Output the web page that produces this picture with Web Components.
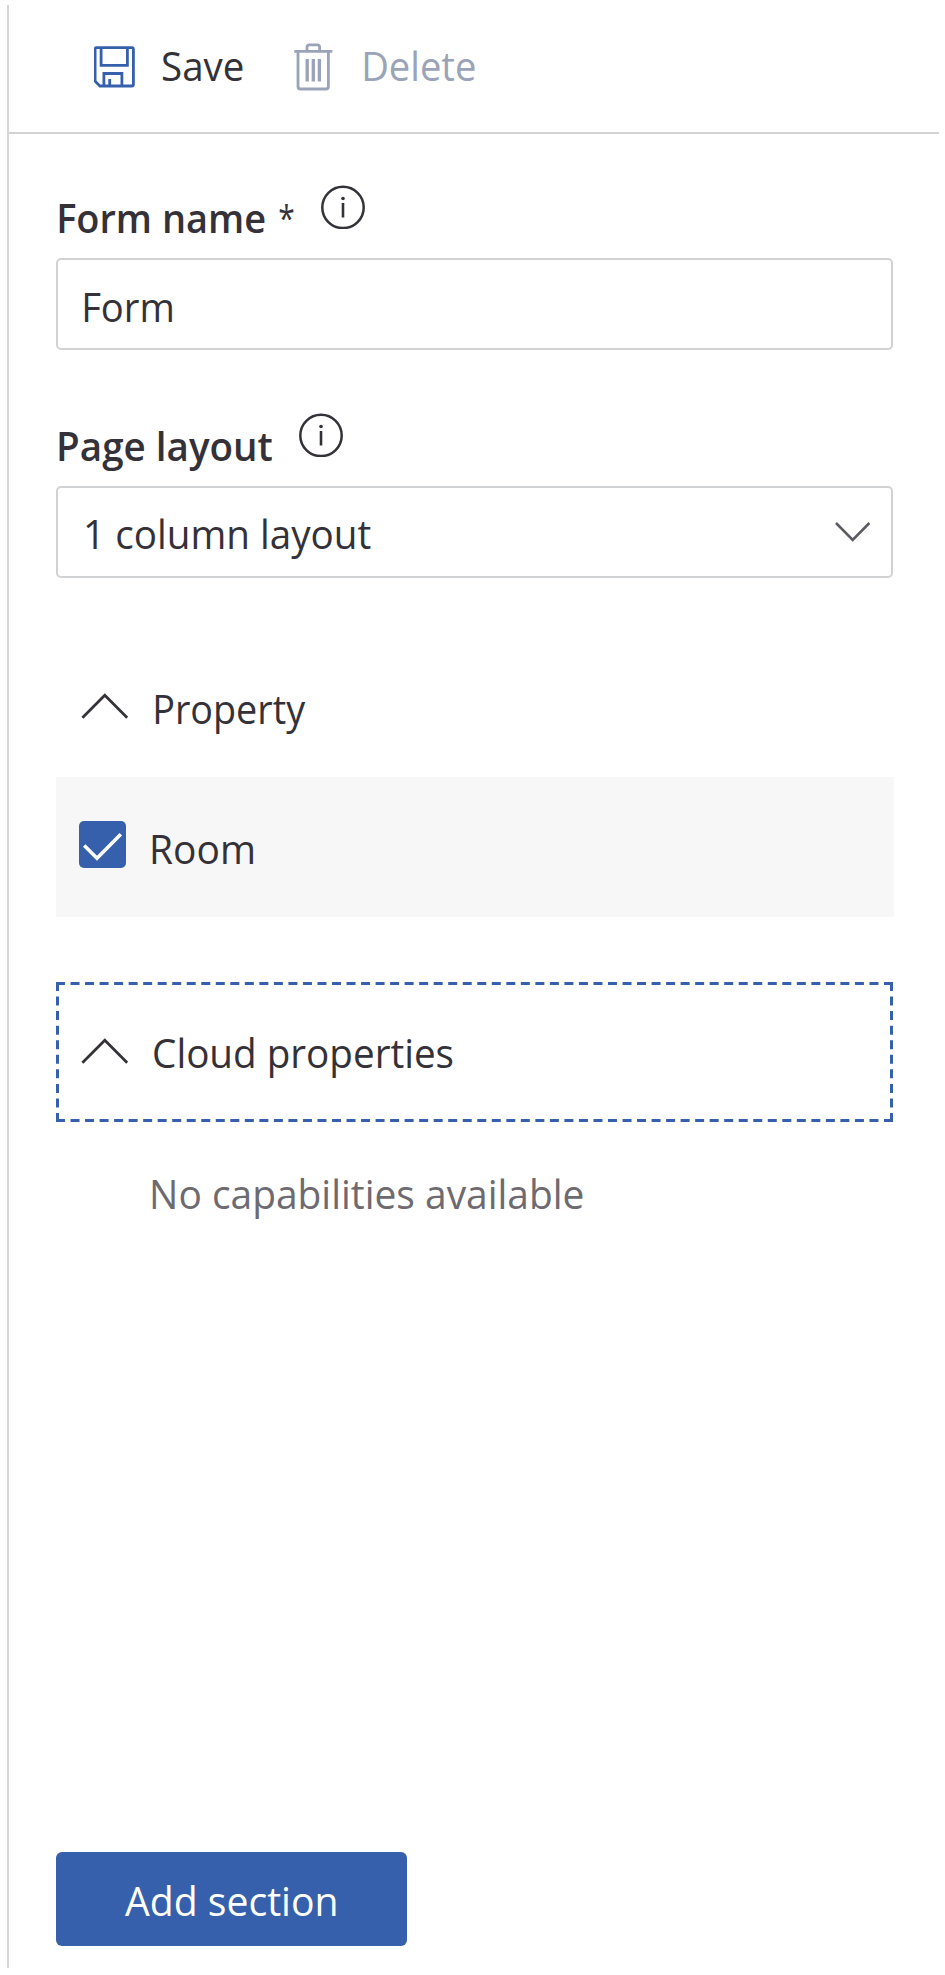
<!DOCTYPE html>
<html lang="en">
<head>
<meta charset="utf-8">
<title>Form</title>
<style>
html,body{margin:0;background:#fff}
body{height:1975px;overflow:hidden;font-family:"Open Sans","Noto Sans",sans-serif;font-size:40px;color:#343138}
</style>
</head>
<body>
<form-panel></form-panel>
<script>
const define = (name, html, Base = HTMLElement) => customElements.define(name, class extends Base {
  constructor() { super(); this.attachShadow({mode:'open'}).innerHTML = html; }
});

/* A line of text whose ink spans exactly the given width. */
customElements.define('fit-text', class extends HTMLElement {
  constructor() {
    super();
    this.attachShadow({mode:'open'}).innerHTML =
      `<style>:host{display:block;flex:none;height:54px;line-height:54px;white-space:nowrap}
       span{display:inline-block;transform-origin:0 50%}</style><span><slot></slot></span>`;
  }
  connectedCallback() {
    const w = +this.getAttribute('width'), cs = getComputedStyle(this);
    const c = document.createElement('canvas').getContext('2d');
    c.font = `${cs.fontWeight} ${cs.fontSize} ${cs.fontFamily}`;
    const m = c.measureText(this.textContent.trim());
    const k = w / (m.actualBoundingBoxRight + m.actualBoundingBoxLeft);
    this.style.width = w + 'px';
    this.shadowRoot.querySelector('span').style.transform =
      `translate(${m.actualBoundingBoxLeft * k}px,1.5px) scaleX(${k})`;
  }
});

define('save-icon', `<style>:host{display:block;flex:none;width:42px;height:42px;color:#3660ab}svg{display:block}</style>
<svg width="42" height="42" viewBox="0 0 42 42" fill="none" stroke="currentColor" stroke-width="2.8">
<path d="M2.7 1.7H37.9Q39.4 1.7 39.4 3.2V38.5Q39.4 40 37.9 40H5.9L1.1 35.2V3.2Q1.1 1.7 2.7 1.7Z"/>
<path d="M7.1 2V19.3H33.4V2M9.9 40V27.5H27.9V40M15.7 33V40"/></svg>`);

define('trash-icon', `<style>:host{display:block;flex:none;width:40px;height:48px;color:#9aa3b8}svg{display:block}</style>
<svg width="40" height="48" viewBox="0 0 40 48" fill="none" stroke="currentColor" stroke-width="2.8">
<path d="M0.3 8.4H38.3M4 8.4V43.5Q4 46 6.5 46H31.9Q34.4 46 34.4 43.5V8.4M13 8V4.2Q13 1.8 15.4 1.8H23.2Q25.6 1.8 25.6 4.2V8"/>
<path stroke-width="3.3" d="M13.2 16V38.5M19.3 16V38.5M25.4 16V38.5"/></svg>`);

define('info-icon', `<style>:host{display:block;flex:none;width:44px;height:44px;color:#343138}svg{display:block}</style>
<svg width="44" height="44" viewBox="0 0 44 44" fill="none" stroke="currentColor" stroke-width="2.5">
<circle cx="22" cy="22.4" r="20.7"/><path stroke-width="2.6" d="M22 18V32.5"/><circle cx="22" cy="13.5" r="1.8" fill="currentColor" stroke="none"/></svg>`);

define('chevron-up', `<style>:host{display:block;flex:none;width:48px;height:26px}svg{display:block}</style>
<svg width="48" height="26" fill="none" stroke="#343138" stroke-width="2.7"><path d="M1.4 24.7L23.8 2.2L46.2 24.7"/></svg>`);

define('chevron-down', `<style>:host{display:block;flex:none;width:36px;height:20px}svg{display:block}</style>
<svg width="36" height="20" fill="none" stroke="#5c5a63" stroke-width="2.6"><path d="M1 1L17.7 17.8L34.4 1"/></svg>`);

define('check-box', `<style>:host{display:block;flex:none;width:47px;height:47px;border-radius:5px;background:#3660ab}svg{display:block}</style>
<svg width="47" height="47" fill="none" stroke="#fff" stroke-width="3.5"><path d="M5.2 24.5L18 37.3L41.8 13.2"/></svg>`);

define('tool-bar', `<style>:host{display:flex;align-items:flex-start;box-sizing:border-box;height:129px;padding-left:85px;border-bottom:2px solid #d1d3d5}</style><slot></slot>`);

define('field-label', `<style>:host{display:flex;height:73px;font-weight:600}</style><slot></slot>`);

define('field-box', `<style>:host{display:flex;box-sizing:border-box;width:837px;height:92px;border:2px solid #d1d2d4;border-radius:5px}</style><slot></slot>`);

define('section-head', `<style>:host{display:flex;position:relative;box-sizing:border-box;width:837px;height:140px;padding-left:25px}
svg{position:absolute;left:0;top:0}
:host(:not([focused])) svg{display:none}</style>
<svg width="837" height="140" stroke="#3660ab" stroke-width="3">
<path stroke-dasharray="9 5.526" d="M0 1.5H837M0 138.5H837"/><path stroke-dasharray="9 5.556" d="M1.5 0V140M835.5 0V140"/></svg><slot></slot>`);

define('option-row', `<style>:host{display:flex;width:838px;height:140px;background:#f7f7f7}</style><slot></slot>`);

define('primary-button', `<style>:host{display:block;width:351px;height:94px;border-radius:6px;background:#3660ab;color:#fff}</style><slot></slot>`);

define('form-panel', `<style>
:host{display:block;box-sizing:border-box;margin:5px 6px 0 7px;height:1963px;border-left:2px solid #d3d5d8}
main{padding-left:47px}
.save-i{margin-top:41px}.save-t{margin:32px 0 0 27px}
.del{color:#9aa3b8}.del-i{margin:38px 0 0 51px}.del-t{margin:32px 0 0 30px}
.first{margin-top:51px}
field-label fit-text{margin:4px 0 0 3px}
.star{font-weight:400;font-size:36px}
</style>
<tool-bar>
 <save-icon class="save-i"></save-icon><fit-text class="save-t" width="80">Save</fit-text>
 <trash-icon class="del-i"></trash-icon><fit-text class="del del-t" width="111">Delete</fit-text>
</tool-bar>
<main>
 <field-label class="first"><fit-text width="206">Form name</fit-text><fit-text class="star" width="15" style="margin:4px 0 0 14px">*</fit-text><info-icon style="margin:0 0 0 27px"></info-icon></field-label>
 <field-box><fit-text width="88" style="margin:18px 0 0 26px">Form</fit-text></field-box>
 <field-label style="margin-top:63px"><fit-text width="213">Page layout</fit-text><info-icon style="margin-left:27px"></info-icon></field-label>
 <field-box><fit-text width="285" style="margin:17px 0 0 28px">1 column layout</fit-text><chevron-down style="margin:34px 0 0 464px"></chevron-down></field-box>
 <section-head style="margin-top:59px"><chevron-up style="margin-top:56px"></chevron-up><fit-text width="151" style="margin:43px 0 0 26px">Property</fit-text></section-head>
 <option-row><check-box style="margin:44px 0 0 23px"></check-box><fit-text width="101" style="margin:43px 0 0 26px">Room</fit-text></option-row>
 <section-head focused style="margin-top:65px"><chevron-up style="margin-top:56px"></chevron-up><fit-text width="299" style="margin:42px 0 0 25px">Cloud properties</fit-text></section-head>
 <fit-text width="431" style="margin:43px 0 0 96px;color:#6d6a70">No capabilities available</fit-text>
 <primary-button style="margin-top:633px"><fit-text width="211" style="padding:20px 0 0 69px">Add section</fit-text></primary-button>
</main>`);
</script>
</body>
</html>
